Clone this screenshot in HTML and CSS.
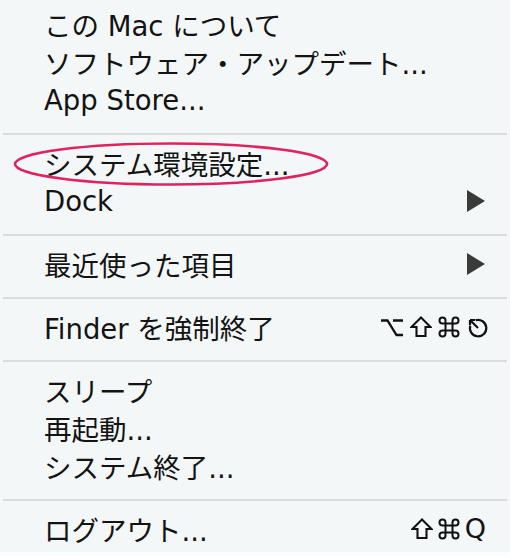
FILE: index.html
```html
<!DOCTYPE html>
<html lang="ja">
<head>
  <meta charset="UTF-8" />
  <title>Apple メニュー</title>
  <link rel="stylesheet" href="styles.css">
</head>
<body>
  <div class="menu">
    <div class="item"><span>この Mac について</span></div>
    <div class="item"><span>ソフトウェア・アップデート...</span></div>
    <div class="item"><span>App Store...</span></div>

    <div class="sep"></div>

    <div class="item"><span>システム環境設定...</span></div>
    <div class="item"><span>Dock</span><span class="arrow"></span></div>

    <div class="sep"></div>

    <div class="item"><span>最近使った項目</span><span class="arrow"></span></div>

    <div class="sep"></div>

    <div class="item">
      <span>Finder を強制終了</span>
      <span class="keys">
        <!-- option -->
        <svg class="key-icon" viewBox="0 0 24 22" width="24" height="22">
          <path d="M1 4.5 H7.5 L16.5 19 H23 M13 4.5 H23" fill="none" stroke="#111" stroke-width="2.3"/>
        </svg>
        <!-- shift -->
        <svg class="key-icon" viewBox="0 0 22 22" width="22" height="22">
          <path d="M11 1.5 L20.5 11 H15.5 V20 H6.5 V11 H1.5 Z" fill="none" stroke="#111" stroke-width="2.1" stroke-linejoin="miter"/>
        </svg>
        <!-- command -->
        <svg class="key-icon" viewBox="0 0 22 22" width="22" height="22">
          <path d="M7.5 7.5V4.5A3 3 0 1 0 4.5 7.5H17.5A3 3 0 1 0 14.5 4.5V17.5A3 3 0 1 0 17.5 14.5H4.5A3 3 0 1 0 7.5 17.5Z" fill="none" stroke="#111" stroke-width="2"/>
        </svg>
        <!-- escape -->
        <svg class="key-icon" viewBox="0 0 22 22" width="22" height="22">
          <path d="M9.6 4.3 A8.2 8.2 0 1 1 4.3 9.6" fill="none" stroke="#111" stroke-width="2.2"/>
          <path d="M12 12 L4 4 M4 4 L4 9 M4 4 L9 4" fill="none" stroke="#111" stroke-width="2.2"/>
        </svg>
      </span>
    </div>

    <div class="sep"></div>

    <div class="item"><span>スリープ</span></div>
    <div class="item"><span>再起動...</span></div>
    <div class="item"><span>システム終了...</span></div>

    <div class="sep"></div>

    <div class="item">
      <span>ログアウト...</span>
      <span class="keys quit">
        <svg class="key-icon" viewBox="0 0 22 22" width="22" height="22">
          <path d="M11 1.5 L20.5 11 H15.5 V20 H6.5 V11 H1.5 Z" fill="none" stroke="#111" stroke-width="2.1"/>
        </svg>
        <svg class="key-icon" viewBox="0 0 22 22" width="22" height="22">
          <path d="M7.5 7.5V4.5A3 3 0 1 0 4.5 7.5H17.5A3 3 0 1 0 14.5 4.5V17.5A3 3 0 1 0 17.5 14.5H4.5A3 3 0 1 0 7.5 17.5Z" fill="none" stroke="#111" stroke-width="2"/>
        </svg>
        <span class="key-q">Q</span>
      </span>
    </div>

    <!-- red marker drawn over the menu -->
    <svg class="mark" viewBox="0 0 320 46" width="320" height="46">
      <ellipse cx="159" cy="22" rx="156" ry="20.5" fill="none" stroke="#e0235f" stroke-width="2.6"/>
    </svg>
  </div>
</body>
</html>
```

FILE: styles.css
```css
body {
  margin: 0;
  background: #fcfdfd;
  font-family: "DejaVu Sans", "Noto Sans CJK JP", sans-serif;
  color: #131313;
}
.menu {
  position: relative;
  width: 510px;
  height: 552px;
  box-sizing: border-box;
  padding-top: 5px;
  background: #f3f7f7;
}
.item {
  display: flex;
  align-items: center;
  justify-content: space-between;
  height: 38px;
  padding: 0 22px 0 44px;
  font-size: 27.5px;
  white-space: nowrap;
}
.sep {
  height: 2px;
  margin: 14px 3px 9px 3px;
  background: #d9dddd;
}
.arrow {
  width: 0;
  height: 0;
  margin-right: 3px;
  border-top: 11px solid transparent;
  border-bottom: 11px solid transparent;
  border-left: 18px solid #3a3a3a;
}
.keys {
  display: flex;
  align-items: center;
  gap: 6px;
}
.keys.quit {
  margin-right: 2px;
  gap: 5px;
}
.key-icon {
  display: block;
}
.key-q {
  font-size: 27px;
  line-height: 22px;
}
.mark {
  position: absolute;
  left: 12px;
  top: 142px;
}
```
